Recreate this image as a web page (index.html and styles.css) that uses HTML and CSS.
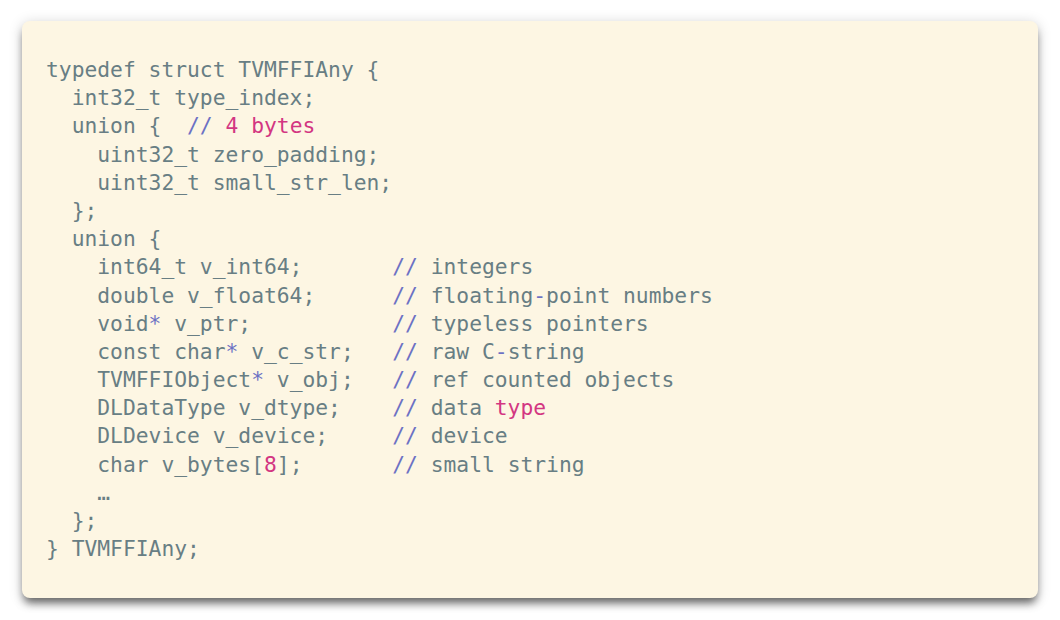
FILE: index.html
```html
<!DOCTYPE html>
<html>
<head>
<meta charset="utf-8">
<link rel="stylesheet" href="styles.css">
</head>
<body>
<div class="card">
<pre class="code">typedef struct TVMFFIAny {
  int32_t type_index;
  union {  <span class="v">//</span> <span class="m">4 bytes</span>
    uint32_t zero_padding;
    uint32_t small_str_len;
  };
  union {
    int64_t v_int64;       <span class="v">//</span> integers
    double v_float64;      <span class="v">//</span> floating<span class="v">-</span>point numbers
    void<span class="v">*</span> v_ptr;           <span class="v">//</span> typeless pointers
    const char<span class="v">*</span> v_c_str;   <span class="v">//</span> raw C<span class="v">-</span>string
    TVMFFIObject<span class="v">*</span> v_obj;   <span class="v">//</span> ref counted objects
    DLDataType v_dtype;    <span class="v">//</span> data <span class="m">type</span>
    DLDevice v_device;     <span class="v">//</span> device
    char v_bytes[<span class="m">8</span>];       <span class="v">//</span> small string
    …
  };
} TVMFFIAny;</pre>
</div>
</body>
</html>
```
FILE: styles.css
```css
html, body {
  margin: 0;
  background: #ffffff;
}
body {
  padding: 21px 22px 22px 22px;
}
.card {
  width: 1016px;
  height: 577px;
  box-sizing: border-box;
  background: #fdf6e3;
  border-radius: 8px;
  box-shadow: 0 7px 8px -2px rgba(0, 0, 0, 0.55), 0 2px 14px rgba(0, 0, 0, 0.18);
  padding: 35px 24px 35px 24px;
}
.code {
  margin: 0;
  font-family: "DejaVu Sans Mono", monospace;
  font-size: 21.3px;
  line-height: 28.18px;
  color: #687e84;
  white-space: pre;
}
.v { color: #6c71c4; }
.m { color: #d33682; }
```
